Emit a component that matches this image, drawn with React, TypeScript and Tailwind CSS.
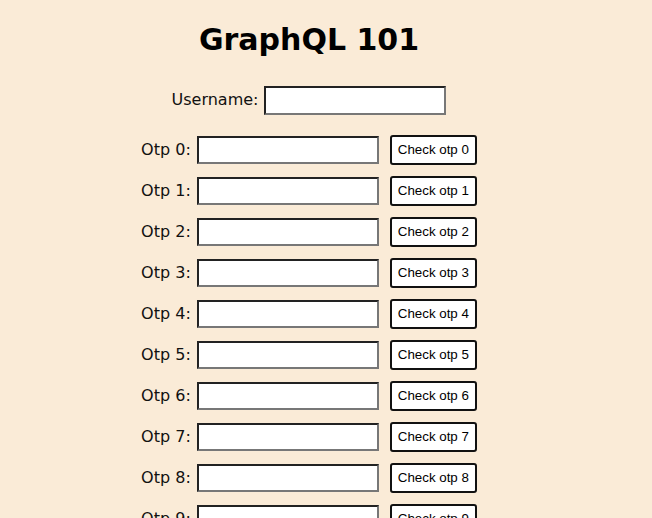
const otps = [0, 1, 2, 3, 4, 5, 6, 7, 8, 9];

export default function App() {
  return (
    <div className="min-h-screen bg-[#faebd7] font-['DejaVu_Sans',sans-serif] text-[#111]">
      <div className="w-[618px] flex flex-col items-center">
        <h1 className="mt-[21px] text-[30px] leading-[38px] font-bold text-black">GraphQL 101</h1>

        <div className="mt-[26px] flex items-center h-[30px]">
          <label className="text-[16px]">Username:</label>
          <input
            type="text"
            className="ml-[6px] w-[182px] h-[29px] bg-white border-2 border-t-[#222] border-l-[#222] border-b-[#777] border-r-[#777] outline-none"
          />
        </div>

        <div className="mt-[20px] flex flex-col gap-[11px]">
          {otps.map((i) => (
            <div key={i} className="flex items-center justify-center h-[30px]">
              <label className="text-[16px]">Otp {i}:</label>
              <input
                type="text"
                className="ml-[6px] w-[182px] h-[28px] bg-white border-2 border-t-[#222] border-l-[#222] border-b-[#777] border-r-[#777] outline-none"
              />
              <button
                type="button"
                className="ml-[11px] h-[30px] px-[6px] bg-white border-2 border-[#111] rounded-[3px] font-['Liberation_Sans',Arial,sans-serif] text-[13.33px] text-black"
              >
                Check otp {i}
              </button>
            </div>
          ))}
        </div>
      </div>
    </div>
  );
}
